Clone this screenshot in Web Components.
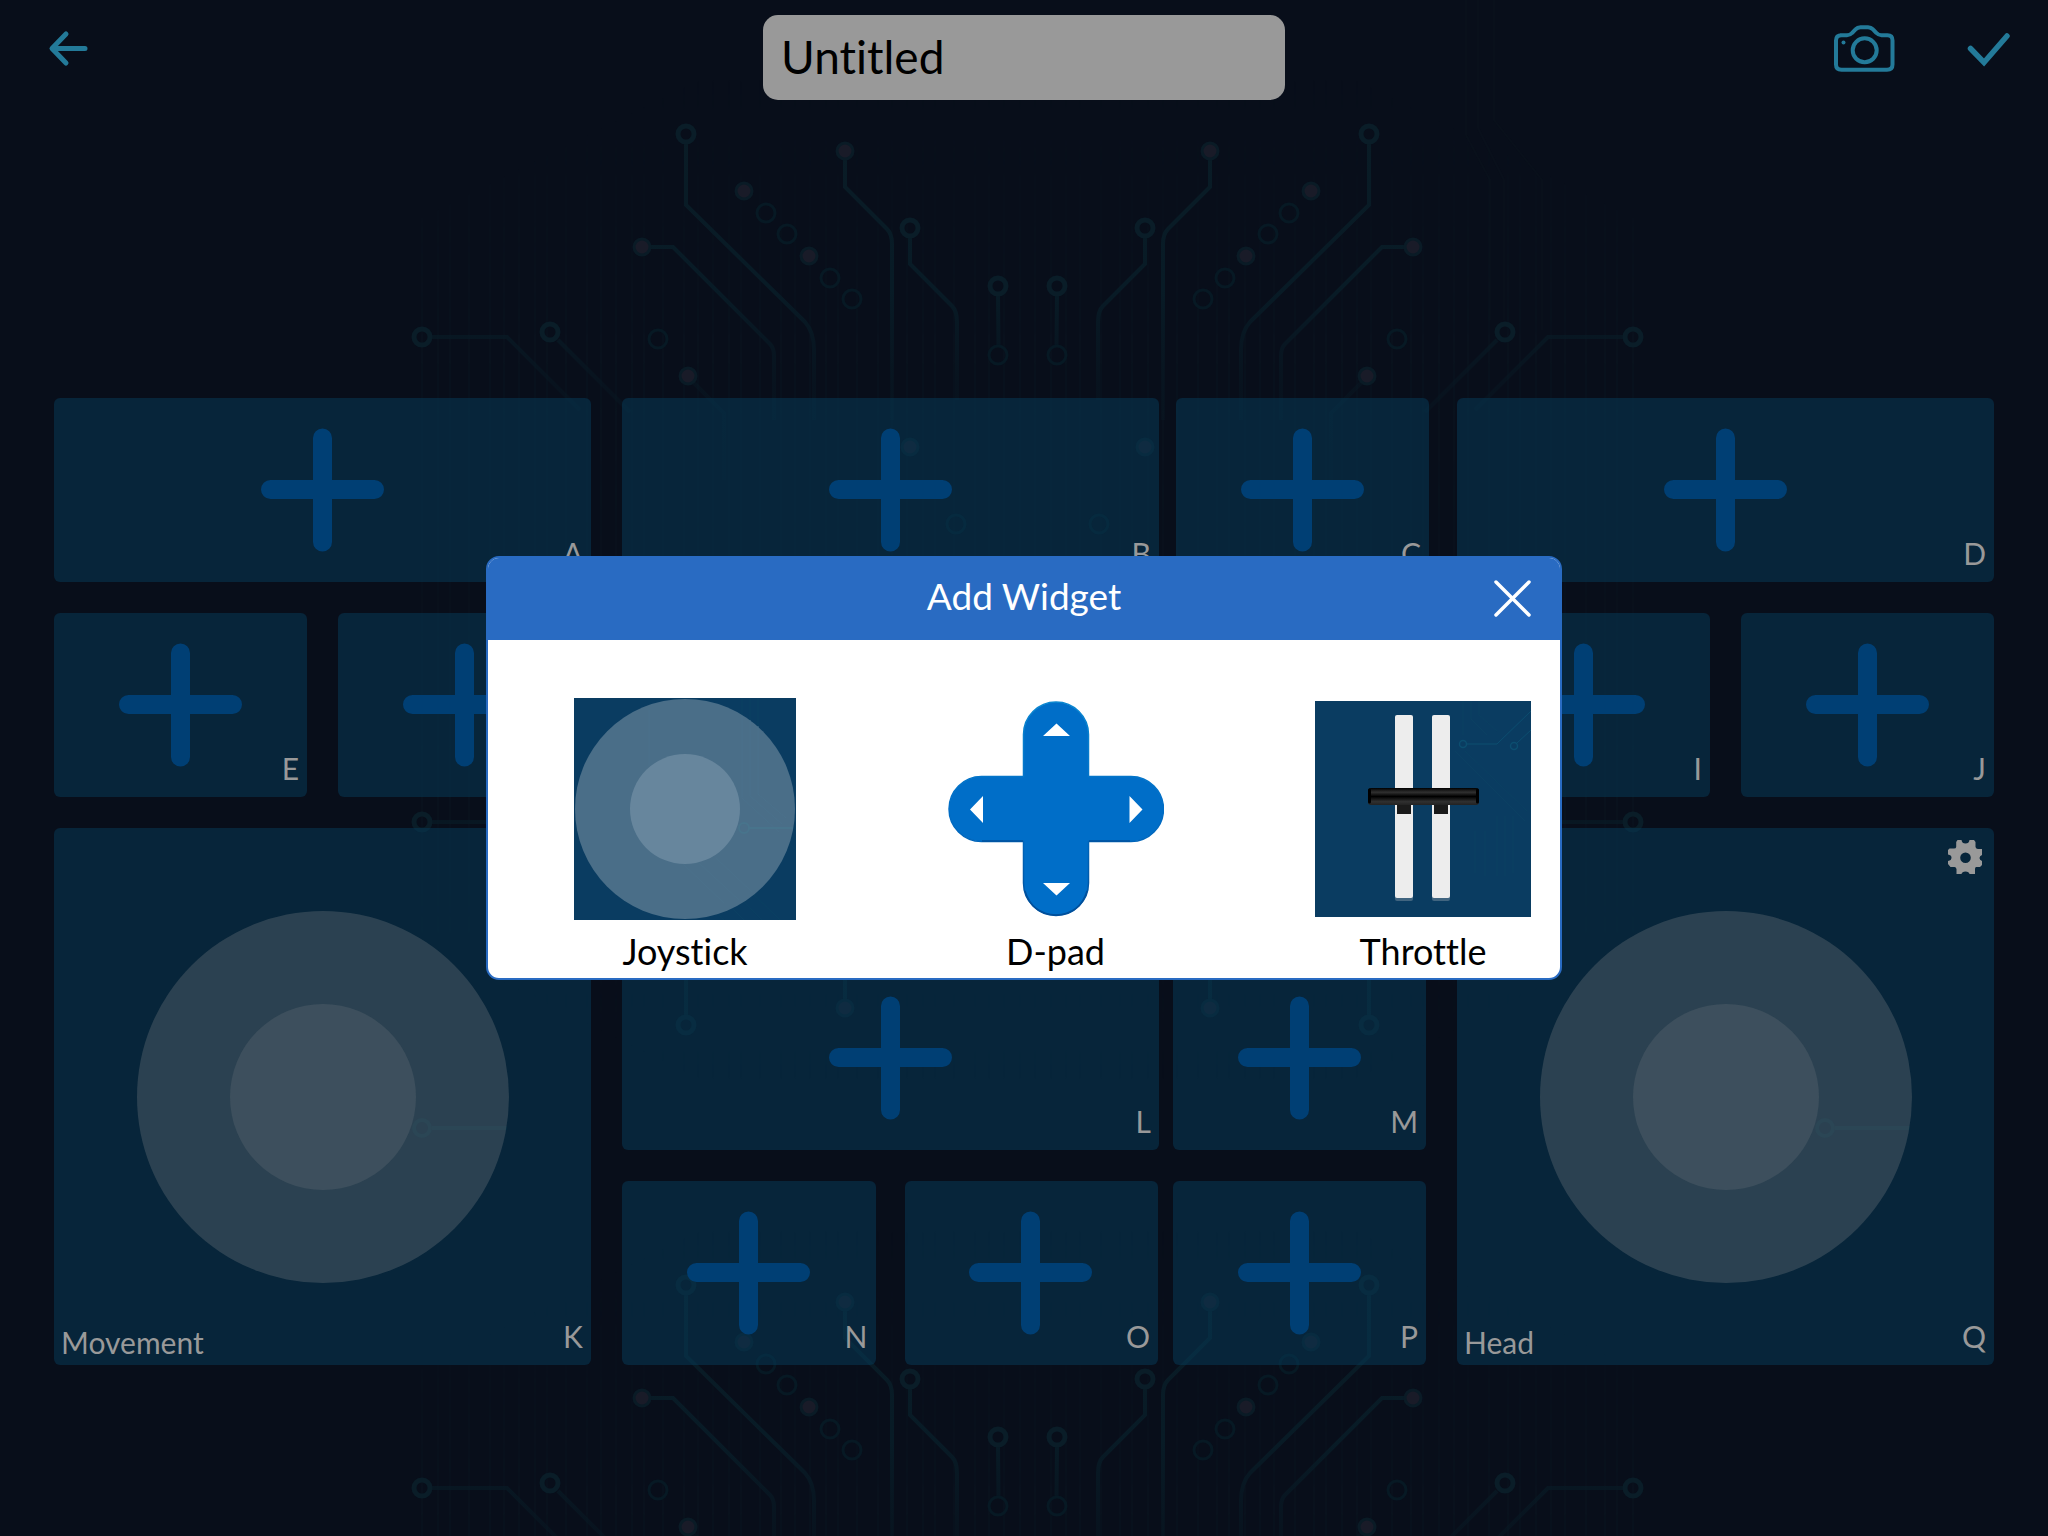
<!DOCTYPE html>
<html lang="en">
<head>
<meta charset="utf-8">
<title>Controller Editor</title>
<style>
  html, body { margin: 0; min-height: 100%; background: #080e1a; }
  body { font-family: Lato, "Liberation Sans", sans-serif; font-variant-ligatures: none; }
</style>
</head>
<body>
<controller-editor></controller-editor>

<script>
const define = (name, html) => customElements.define(name, class extends HTMLElement {
  connectedCallback() {
    if (this.shadowRoot) return;
    this.attachShadow({ mode: "open" }).innerHTML = typeof html === "function" ? html(this) : html;
  }
});

// Faint circuit board, one quarter drawn and mirrored in both directions.
define("circuit-backdrop", `
<style>
  :host { display: block; position: absolute; inset: 0; overflow: hidden; }
  svg { display: block; width: 100%; height: 100%; }
</style>
<svg viewBox="0 0 2048 1536" preserveAspectRatio="xMidYMin slice" fill="none" aria-hidden="true">
  <defs>
    <linearGradient id="fade" gradientUnits="userSpaceOnUse" x1="0" y1="100" x2="0" y2="480">
      <stop offset="0" stop-color="#0a1c26"/><stop offset=".5" stop-color="#081b26"/><stop offset=".75" stop-color="#081a25" stop-opacity=".4"/><stop offset="1" stop-color="#071a25" stop-opacity=".2"/>
    </linearGradient>
    <pattern id="hair" width="97" height="580" patternUnits="userSpaceOnUse">
      <path d="M5 0V580M19 0V580M34 0V580M50 0V580M62 0V580M81 0V580" stroke="#0a1520" stroke-width="2"/>
    </pattern>
    <linearGradient id="hairfade" x1="0" y1="0" x2="0" y2="1">
      <stop offset="0" stop-color="#000"/><stop offset=".6" stop-color="#888"/><stop offset="1" stop-color="#555"/>
    </linearGradient>
    <mask id="hm"><path d="M418 220L700 80H1028V580H418Z" fill="url(#hairfade)"/></mask>
    <g id="quarter">
      <rect x="418" y="60" width="610" height="520" fill="url(#hair)" mask="url(#hm)"/>
      <g stroke="url(#fade)" stroke-width="4">
        <path d="M686 144V205L805 322Q814 332 814 350V420"/>
        <path d="M845 158V187L887 229Q892 234 892 244V420"/>
        <path d="M650 247H673L770 344Q774 348 774 356V420"/>
        <path d="M910 238V264L952 306Q957 311 957 322V400"/>
        <path d="M432 337H507L580 410"/>
        <path d="M558 340L630 412"/>
        <path d="M692 381L724 413V480"/>
        <path d="M998 296L998.500 346"/>
      </g>
      <g stroke="#0a1d28" stroke-width="5">
        <circle cx="686" cy="134" r="8"/><circle cx="910" cy="228" r="8"/>
        <circle cx="422" cy="337" r="8"/><circle cx="550" cy="332" r="8"/><circle cx="998" cy="286" r="8"/>
      </g>
      <g stroke="#071924" stroke-width="3">
        <circle cx="766" cy="213" r="9"/><circle cx="787" cy="234" r="9"/>
        <circle cx="830" cy="278" r="9"/><circle cx="852" cy="299" r="9"/>
        <circle cx="658" cy="339" r="9"/><circle cx="998" cy="355" r="9"/><circle cx="956" cy="524" r="9"/>
      </g>
      <g fill="#191b28" stroke="#0a1b26" stroke-width="3">
        <circle cx="845" cy="151" r="8"/><circle cx="744" cy="191" r="8"/><circle cx="809" cy="256" r="8"/>
        <circle cx="642" cy="247" r="8"/><circle cx="688" cy="376" r="8"/><circle cx="910" cy="447" r="8"/>
      </g>
    </g>
    <g id="half">
      <use href="#quarter"/><use href="#quarter" transform="translate(2055 0) scale(-1 1)"/>
    </g>
  </defs>
  <g stroke="#0a121d" stroke-width="2" opacity=".6">
    <path d="M1466 0V135L1490 180V320M1478 0V128L1504 180V320M1494 0V120L1542 180V330"/>
  </g>
  <use href="#half"/>
  <use href="#half" transform="translate(0 1159) scale(1 -1)"/>
  <use href="#half" transform="translate(0 1151)"/>
  <g stroke="#091a25" stroke-width="4">
    <circle cx="422" cy="1128" r="8"/><path d="M432 1128H507"/>
    <circle cx="1825" cy="1128" r="8"/><path d="M1835 1128H1910"/>
  </g>
</svg>`);

define("editor-header", `
<style>
  :host { display: grid; grid-template-columns: 1fr 522px 1fr; align-items: start; padding: 15px 36px 0; position: relative; }
  button { border: 0; padding: 0; background: none; display: block; }
  svg { display: block; }
  .back { margin: 8px 0 0 4px; justify-self: start; }
  .actions { display: flex; justify-content: flex-end; gap: 68px; margin-top: 8px; }
  input { box-sizing: border-box; display: block; width: 100%; height: 85px; border: 0; border-radius: 15px;
    background: #999; color: #000; font: 400 46px Lato, sans-serif; font-variant-ligatures: none; padding: 0 18px 2px; outline: 0; }
</style>
<button class="back" aria-label="Back"><svg width="52" height="50" viewBox="0 0 52 50" fill="none" stroke="#237a99" stroke-width="5" stroke-linecap="round" stroke-linejoin="round"><path d="M45 25.500H13M26 11L12 25.500L26 40"/></svg></button>
<input value="Untitled" aria-label="Controller name">
<div class="actions">
  <button aria-label="Take photo"><svg width="64" height="52" viewBox="0 0 64 52" fill="none" stroke="#237a99" stroke-width="4"><path d="M8 12.200H15Q18 12.200 20 10L23.500 6.400Q25.500 4.200 28.500 4.200H36Q39 4.200 41 6.400L44.500 10Q46.500 12.200 49.500 12.200H55.500Q60.500 12.200 60.500 17.500V41.500Q60.500 46.800 55 46.800H9.500Q4 46.800 4 41.500V17.500Q4 12.200 9.500 12.200"/><circle cx="32.700" cy="27.300" r="12"/><circle cx="11.500" cy="19.500" r="2" fill="#237a99" stroke="none"/></svg></button>
  <button aria-label="Save"><svg width="48" height="50" viewBox="0 0 48 50" fill="none" stroke="#237a99" stroke-width="5.500" stroke-linecap="round" stroke-linejoin="miter"><path d="M6.500 24.500L20 38.500L43 12"/></svg></button>
</div>`);

// Empty slot with a plus sign; the slotted text is its letter.
define("slot-cell", `
<style>
  :host { display: block; height: 184px; min-width: 0; }
  button { box-sizing: border-box; width: 100%; height: 100%; border: 0; border-radius: 6px; padding: 0; position: relative;
    background: rgba(5, 60, 90, .5); color: #999; font: 400 30px/36px Lato, sans-serif; display: grid; place-items: center; }
  svg { display: block; }
  span { position: absolute; right: 8px; bottom: 11px; }
</style>
<button aria-label="Add widget">
  <svg width="124" height="124" viewBox="0 0 124 124" stroke="#003f74" stroke-width="19" stroke-linecap="round"><path d="M61.500 10V114M9.500 61.500H113.500"/></svg>
  <span><slot></slot></span>
</button>`);

define("joystick-cell", el => `
<style>
  :host { display: block; height: 537px; position: relative; border-radius: 6px; background: rgba(5, 60, 90, .5); color: #999; font-size: 30px; line-height: 36px; }
  .pad { height: 100%; display: grid; place-items: center; }
  .ring { width: 372px; height: 372px; border-radius: 50%; background: rgba(153, 153, 153, .25); display: grid; place-items: center; }
  .knob { width: 186px; height: 186px; border-radius: 50%; background: rgba(153, 153, 153, .16); }
  .letter { position: absolute; right: 8px; bottom: 11px; }
  .name { position: absolute; left: 7px; bottom: 5px; }
  button { position: absolute; right: 12px; top: 12px; border: 0; padding: 0; background: none; }
  svg { display: block; }
</style>
<div class="pad"><div class="ring"><div class="knob"></div></div></div>
<span class="name"><slot></slot></span>
<span class="letter">${el.getAttribute("letter")}</span>
${el.hasAttribute("settings") ? `<button aria-label="Settings"><svg width="34" height="34" viewBox="0 0 34 34"><path fill="#999" fill-rule="evenodd" d="M9.500 0H13.500Q14 3.500 17.500 3.500Q21 3.500 21.500 0H26L27.500 2V7Q28 9 30 9H34V15Q31.500 16 31.500 18Q31.500 20 34 21V25L32 27H28Q27 27.500 27 29V34H21.500Q21 31.500 17.500 31.500Q14 31.500 13.500 34H8.500V29Q8 27 6.500 27H2.500L0 24V21Q3.500 20.500 3.500 17.500Q3.500 15 0 14.500V10L1.500 8.500H6Q8 8.500 8.200 7V2ZM17.500 12.500A5.300 5.300 0 1 0 17.500 23.100A5.300 5.300 0 1 0 17.500 12.500Z"/></svg></button>` : ""}`);

define("widget-board", `
<style>
  :host { display: flex; gap: 28px; padding: 298px 54px 171px; position: relative; }
  .side, .middle { display: flex; flex-direction: column; gap: 31px; min-width: 0; }
  .side { flex: 537 1 0; }
  .middle { flex: 807 1 0; padding-left: 3px; }
  .row { display: grid; gap: 31px; grid-template-columns: 1fr 1fr; }
  .top { grid-template-columns: 537fr 253fr; gap: 17px; }
  .tall { grid-template-columns: 537fr 253fr; gap: 17px; height: 322px; }
  .low { grid-template-columns: 537fr 253fr; gap: 14px; margin-right: 3px; }
  .last { grid-template-columns: 536fr 253fr; gap: 15px; margin-right: 3px; }
  .pair { display: grid; grid-template-columns: 1fr 1fr; gap: 29px; }
  .tall slot-cell { height: 322px; }
</style>
<div class="side">
  <slot-cell>A</slot-cell>
  <div class="row"><slot-cell>E</slot-cell><slot-cell></slot-cell></div>
  <joystick-cell letter="K">Movement</joystick-cell>
</div>
<div class="middle">
  <div class="row top"><slot-cell>B</slot-cell><slot-cell>C</slot-cell></div>
  <div class="row tall"><slot-cell></slot-cell><slot-cell></slot-cell></div>
  <div class="row low"><slot-cell>L</slot-cell><slot-cell>M</slot-cell></div>
  <div class="row last"><div class="pair"><slot-cell>N</slot-cell><slot-cell>O</slot-cell></div><slot-cell>P</slot-cell></div>
</div>
<div class="side">
  <slot-cell>D</slot-cell>
  <div class="row"><slot-cell>I</slot-cell><slot-cell>J</slot-cell></div>
  <joystick-cell letter="Q" settings>Head</joystick-cell>
</div>`);

define("widget-option", `
<style>
  :host { display: block; }
  button { border: 0; padding: 0; background: none; color: #000; font: 400 36px/44px Lato, sans-serif; font-variant-ligatures: none;
    display: flex; flex-direction: column; align-items: center; gap: 9px; }
  .art { height: 222px; display: grid; place-items: center; }
</style>
<button><span class="art"><slot name="art"></slot></span><span><slot></slot></span></button>`);

define("add-widget-dialog", `
<style>
  :host { position: absolute; inset: 0; display: grid; place-items: center; }
  section { box-sizing: border-box; width: 1076px; max-width: 100%; border: 2px solid #296bc2; border-radius: 13px; overflow: hidden; background: #fff; }
  header { display: grid; grid-template-columns: 1fr auto 1fr; align-items: center; height: 82px; padding: 0 28px; background: #296bc2; color: #fff; }
  h1 { margin: 0; padding-bottom: 6px; font-size: 37px; line-height: 44px; font-weight: 400; grid-column: 2; }
  header button { justify-self: end; border: 0; padding: 0; background: none; }
  svg { display: block; }
  .options { display: flex; justify-content: space-between; padding: 58px 29px 5px 86px; }
</style>
<section role="dialog" aria-labelledby="title">
  <header>
    <h1 id="title">Add Widget</h1>
    <button aria-label="Close"><svg width="40" height="40" viewBox="0 0 40 40" stroke="#fff" stroke-width="3.500" stroke-linecap="round"><path d="M4 3L37 36M37 3L4 36"/></svg></button>
  </header>
  <div class="options">
    <widget-option>
      <svg slot="art" width="222" height="222" viewBox="0 0 222 222" fill="none">
        <rect width="222" height="222" fill="#0a3c61"/>
        <path d="M75 10V70M168 0V100L222 152M176 0V98L222 142M184 0V96L222 132M96 165L150 222M108 160L170 222M125 160L188 222M142 160L206 222" stroke="#0b4062"/>
        <circle cx="111" cy="111" r="110" fill="#4a6e88"/>
        <path d="M75 12V68M168 18V100L205 134M176 22V98L208 126M184 28V96L212 120M108 165L150 205M125 165L165 202M142 160L178 194" stroke="#4b718b"/>
        <circle cx="170" cy="130" r="5" stroke="#48748c" stroke-width="2"/><path d="M175 130H219" stroke="#48748c" stroke-width="2"/>
        <circle cx="111" cy="111" r="55" fill="#67869d"/>
      </svg>
      Joystick
    </widget-option>
    <widget-option>
      <svg slot="art" width="216" height="216" viewBox="0 0 216 216">
        <defs><linearGradient id="edge" x1="0" y1="0" x2="0" y2="1"><stop offset="0" stop-color="#0b87d0"/><stop offset=".5" stop-color="#006dc6"/><stop offset="1" stop-color="#00509c"/></linearGradient></defs>
        <path d="M75.500 33.500a32.500 32.500 0 0 1 65 0V75.500H183a32.500 32.500 0 0 1 0 65H140.500V182a32.500 32.500 0 0 1 -65 0V140.500H33.500a32.500 32.500 0 0 1 0 -65H75.500Z" fill="#006ec8" stroke="url(#edge)" stroke-width="1.500"/>
        <path d="M34 140H75M141 140H182M77 190Q84 213 108 214Q132 213 139 190" fill="none" stroke="#00509c" stroke-width="1.500"/>
        <path d="M95 35L108.500 22.500L122 35ZM95 182L108.500 194.500L122 182ZM35 95V122L22 108.500ZM181.500 95V122L194.500 108.500Z" fill="#fff"/>
      </svg>
      D-pad
    </widget-option>
    <widget-option>
      <svg slot="art" width="216" height="216" viewBox="0 0 216 216" fill="none">
        <defs><linearGradient id="bar" x1="0" y1="0" x2="0" y2="1"><stop offset="0" stop-color="#000"/><stop offset=".25" stop-color="#303030"/><stop offset=".5" stop-color="#000"/><stop offset=".8" stop-color="#303030"/><stop offset="1" stop-color="#222"/></linearGradient></defs>
        <rect width="216" height="216" fill="#0a3c61"/>
        <circle cx="148" cy="43" r="3.500" stroke="#0c4e70" stroke-width="1.500"/><circle cx="199" cy="45" r="3.500" stroke="#0c4e70" stroke-width="1.500"/>
        <path d="M152 43H182L216 10M202 42L216 29" stroke="#0c4e70" stroke-width="1"/>
        <path d="M148 0V34M156 0V18L172 34M164 0V14L182 30M140 50L210 120M150 50L212 110M160 130V172M170 130V175M182 115V175M190 115V175M198 115V172" stroke="#0b4062"/>
        <rect x="80" y="15" width="18" height="185" rx="2" fill="#416580"/><rect x="117" y="15" width="18" height="185" rx="2" fill="#416580"/>
        <rect x="80" y="14" width="18" height="183" rx="2" fill="#ededed"/><rect x="117" y="14" width="18" height="183" rx="2" fill="#ededed"/>
        <rect x="82" y="100" width="14" height="13" fill="#1a1a1a"/><rect x="119" y="100" width="14" height="13" fill="#1a1a1a"/>
        <rect x="53" y="87" width="111" height="17" rx="3" fill="url(#bar)"/>
        <path d="M54.500 89V101M162.500 89V101" stroke="#000" stroke-width="3" stroke-linecap="round"/>
      </svg>
      Throttle
    </widget-option>
  </div>
</section>`);

define("controller-editor", `
<style>
  :host { display: block; position: relative; min-height: 100vh; }
</style>
<circuit-backdrop></circuit-backdrop>
<editor-header></editor-header>
<widget-board></widget-board>
<add-widget-dialog></add-widget-dialog>`);
</script>
</body>
</html>
